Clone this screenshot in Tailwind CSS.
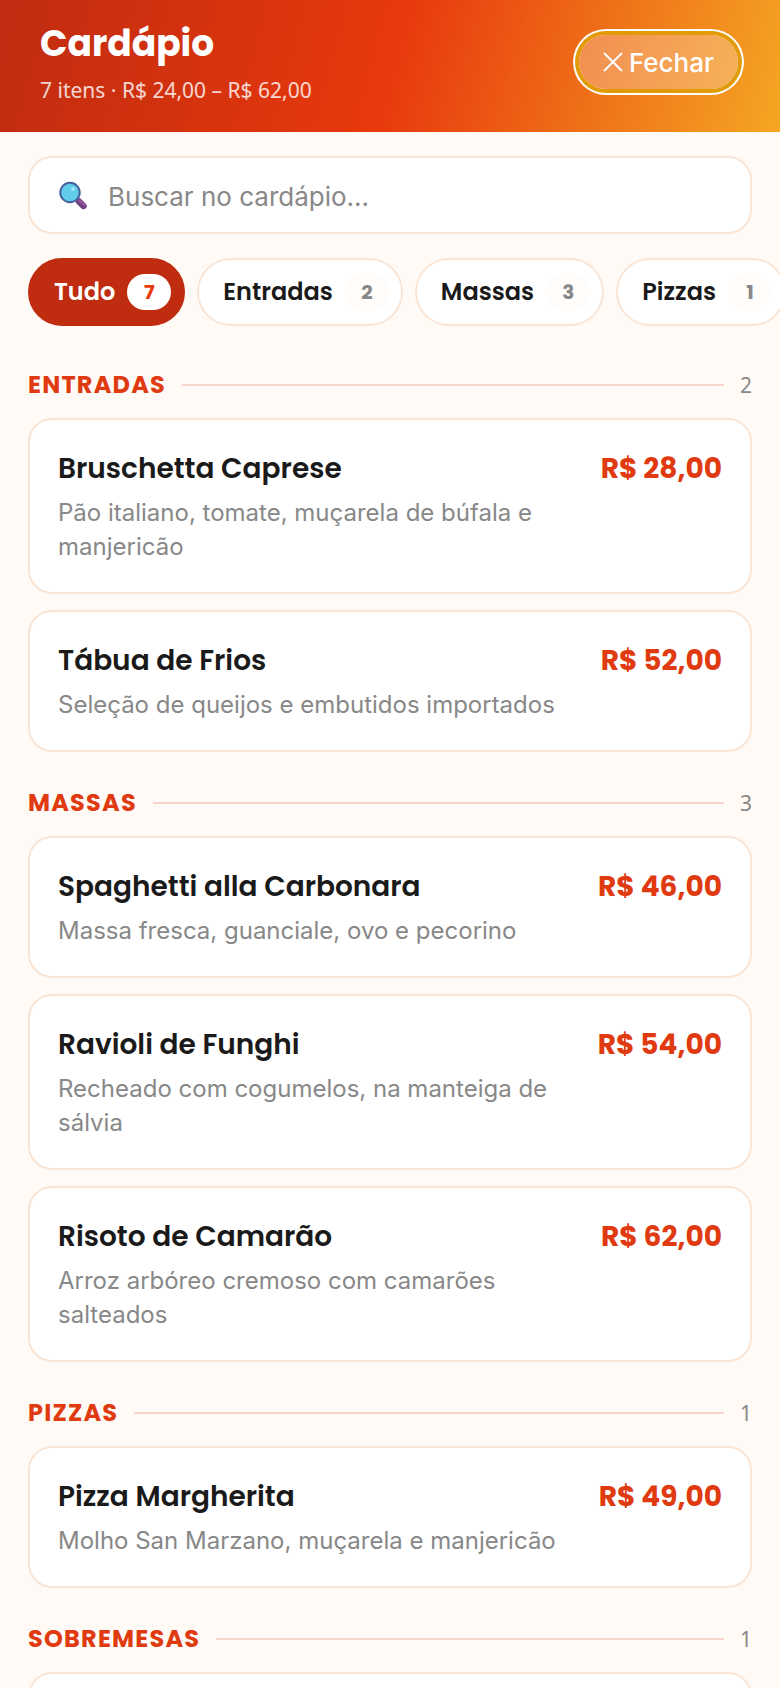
<!DOCTYPE html>
<html lang="pt-BR">
<head>
    <meta charset="UTF-8">
    <meta name="viewport" content="width=device-width, initial-scale=1.0">
    <title>Cardápio</title>
    <script src="https://cdn.jsdelivr.net/npm/@tailwindcss/browser@4"></script>
</head>
<body class="h-screen flex flex-col overflow-hidden bg-[#fffaf5] text-[#1a1a1a] font-['Poppins','Inter',sans-serif]">

    <!-- Cabeçalho -->
    <header class="shrink-0 flex items-center justify-between pt-5 pb-7 pl-10 pr-[42px] text-white bg-[linear-gradient(105deg,#bf2c10_0%,#e8380d_50%,#f5a623_100%)]">
        <div>
            <h1 class="text-[36px] leading-[48px] font-bold">Cardápio</h1>
            <p class="mt-2 text-[21px] leading-7 text-white/80 font-['Segoe_UI','Noto_Sans',sans-serif]">7 itens · R$ 24,00 – R$ 62,00</p>
        </div>
        <button type="button" id="fechar" class="flex items-center gap-[6px] h-[54px] px-6 rounded-full bg-white/25 shadow-[0_0_0_4px_#e29a08,0_0_0_6px_#fff] text-[26px] font-medium font-['Inter',sans-serif]">
            <svg class="w-5 h-5" viewBox="0 0 20 20" fill="none" stroke="currentColor" stroke-width="2" aria-hidden="true">
                <path d="M1 1l18 18M19 1L1 19"/>
            </svg>
            Fechar
        </button>
    </header>

    <main class="flex-1 overflow-y-auto pt-6 pb-10 [scrollbar-width:none]">

        <!-- Busca -->
        <div class="px-7">
            <label for="busca" class="flex items-center gap-5 h-[78px] px-7 bg-white border-2 border-[#fae5d5] rounded-3xl">
                <svg class="w-[30px] h-[30px] shrink-0" viewBox="0 0 30 30" aria-hidden="true">
                    <path d="M21 21.500l4.500 4.500" stroke="#6f4080" stroke-width="6.500" stroke-linecap="round"/>
                    <path d="M21.500 20.500l5 4.500" stroke="#93549a" stroke-width="3" stroke-linecap="round"/>
                    <circle cx="12" cy="12.500" r="9.700" fill="#62cdea" stroke="#45609c" stroke-width="2"/>
                    <circle cx="15" cy="9" r="2" fill="#a5e6f7"/>
                </svg>
                <input id="busca" type="text" placeholder="Buscar no cardápio..." aria-label="Buscar no cardápio" class="flex-1 min-w-0 pt-[2px] bg-transparent outline-none text-[26px] font-['Inter',sans-serif] placeholder:text-[#888888]">
            </label>
        </div>

        <!-- Categorias -->
        <nav aria-label="Categorias" class="flex gap-3 mt-6 px-7 overflow-x-auto text-[24px] font-semibold [scrollbar-width:none]">
            <button type="button" class="shrink-0 flex items-center gap-3 h-[68px] pl-6 pr-3 rounded-full border-2 border-[#bf2c10] bg-[#bf2c10] text-white">
                Tudo <span class="w-11 h-9 rounded-full bg-white text-[#e8380d] text-[20px] leading-9 font-bold">7</span>
            </button>
            <button type="button" class="shrink-0 flex items-center gap-3 h-[68px] pl-6 pr-3 rounded-full border-2 border-[#fae5d5] bg-white">
                Entradas <span class="w-11 h-9 rounded-full bg-[#fffcfa] text-[#888888] text-[20px] leading-9 font-bold">2</span>
            </button>
            <button type="button" class="shrink-0 flex items-center gap-3 h-[68px] pl-6 pr-3 rounded-full border-2 border-[#fae5d5] bg-white">
                Massas <span class="w-11 h-9 rounded-full bg-[#fffcfa] text-[#888888] text-[20px] leading-9 font-bold">3</span>
            </button>
            <button type="button" class="shrink-0 flex items-center gap-3 h-[68px] pl-6 pr-3 rounded-full border-2 border-[#fae5d5] bg-white">
                Pizzas <span class="w-11 h-9 rounded-full bg-[#fffcfa] text-[#888888] text-[20px] leading-9 font-bold">1</span>
            </button>
            <button type="button" class="shrink-0 flex items-center gap-3 h-[68px] pl-6 pr-3 rounded-full border-2 border-[#fae5d5] bg-white">
                Sobremesas <span class="w-11 h-9 rounded-full bg-[#fffcfa] text-[#888888] text-[20px] leading-9 font-bold">1</span>
            </button>
        </nav>

        <!-- Itens -->
        <div class="flex flex-col gap-[34px] mt-[42px] px-7">
            <section class="flex flex-col gap-4">
                <div class="flex items-center gap-4 leading-[34px]">
                    <h2 class="text-[24px] font-bold tracking-wider text-[#e03a10]">ENTRADAS</h2>
                    <span class="flex-1 h-[2px] bg-[#f9d3c7]"></span>
                    <span class="text-[21px] text-[#888888] font-['Segoe_UI','Noto_Sans',sans-serif]">2</span>
                </div>
                <article class="flex justify-between gap-6 p-7 bg-white border-2 border-[#fae5d5] rounded-3xl">
                    <div>
                        <h3 class="text-[28px] leading-[42px] font-semibold">Bruschetta Caprese</h3>
                        <p class="mt-[6px] text-[24px] leading-[34px] text-[#888888] font-['Inter',sans-serif]">Pão italiano, tomate, muçarela de búfala e manjericão</p>
                    </div>
                    <span class="shrink-0 text-[28px] leading-[42px] font-bold text-[#e03a10]">R$ 28,00</span>
                </article>
                <article class="flex justify-between gap-6 p-7 bg-white border-2 border-[#fae5d5] rounded-3xl">
                    <div>
                        <h3 class="text-[28px] leading-[42px] font-semibold">Tábua de Frios</h3>
                        <p class="mt-[6px] text-[24px] leading-[34px] text-[#888888] font-['Inter',sans-serif]">Seleção de queijos e embutidos importados</p>
                    </div>
                    <span class="shrink-0 text-[28px] leading-[42px] font-bold text-[#e03a10]">R$ 52,00</span>
                </article>
            </section>

            <section class="flex flex-col gap-4">
                <div class="flex items-center gap-4 leading-[34px]">
                    <h2 class="text-[24px] font-bold tracking-wider text-[#e03a10]">MASSAS</h2>
                    <span class="flex-1 h-[2px] bg-[#f9d3c7]"></span>
                    <span class="text-[21px] text-[#888888] font-['Segoe_UI','Noto_Sans',sans-serif]">3</span>
                </div>
                <article class="flex justify-between gap-6 p-7 bg-white border-2 border-[#fae5d5] rounded-3xl">
                    <div>
                        <h3 class="text-[28px] leading-[42px] font-semibold">Spaghetti alla Carbonara</h3>
                        <p class="mt-[6px] text-[24px] leading-[34px] text-[#888888] font-['Inter',sans-serif]">Massa fresca, guanciale, ovo e pecorino</p>
                    </div>
                    <span class="shrink-0 text-[28px] leading-[42px] font-bold text-[#e03a10]">R$ 46,00</span>
                </article>
                <article class="flex justify-between gap-6 p-7 bg-white border-2 border-[#fae5d5] rounded-3xl">
                    <div>
                        <h3 class="text-[28px] leading-[42px] font-semibold">Ravioli de Funghi</h3>
                        <p class="mt-[6px] text-[24px] leading-[34px] text-[#888888] font-['Inter',sans-serif]">Recheado com cogumelos, na manteiga de sálvia</p>
                    </div>
                    <span class="shrink-0 text-[28px] leading-[42px] font-bold text-[#e03a10]">R$ 54,00</span>
                </article>
                <article class="flex justify-between gap-6 p-7 bg-white border-2 border-[#fae5d5] rounded-3xl">
                    <div>
                        <h3 class="text-[28px] leading-[42px] font-semibold">Risoto de Camarão</h3>
                        <p class="mt-[6px] text-[24px] leading-[34px] text-[#888888] font-['Inter',sans-serif]">Arroz arbóreo cremoso com camarões salteados</p>
                    </div>
                    <span class="shrink-0 text-[28px] leading-[42px] font-bold text-[#e03a10]">R$ 62,00</span>
                </article>
            </section>

            <section class="flex flex-col gap-4">
                <div class="flex items-center gap-4 leading-[34px]">
                    <h2 class="text-[24px] font-bold tracking-wider text-[#e03a10]">PIZZAS</h2>
                    <span class="flex-1 h-[2px] bg-[#f9d3c7]"></span>
                    <span class="text-[21px] text-[#888888] font-['Segoe_UI','Noto_Sans',sans-serif]">1</span>
                </div>
                <article class="flex justify-between gap-6 p-7 bg-white border-2 border-[#fae5d5] rounded-3xl">
                    <div>
                        <h3 class="text-[28px] leading-[42px] font-semibold">Pizza Margherita</h3>
                        <p class="mt-[6px] text-[24px] leading-[34px] text-[#888888] font-['Inter',sans-serif]">Molho San Marzano, muçarela e manjericão</p>
                    </div>
                    <span class="shrink-0 text-[28px] leading-[42px] font-bold text-[#e03a10]">R$ 49,00</span>
                </article>
            </section>

            <section class="flex flex-col gap-4">
                <div class="flex items-center gap-4 leading-[34px]">
                    <h2 class="text-[24px] font-bold tracking-wider text-[#e03a10]">SOBREMESAS</h2>
                    <span class="flex-1 h-[2px] bg-[#f9d3c7]"></span>
                    <span class="text-[21px] text-[#888888] font-['Segoe_UI','Noto_Sans',sans-serif]">1</span>
                </div>
                <article class="flex justify-between gap-6 p-7 bg-white border-2 border-[#fae5d5] rounded-3xl">
                    <div>
                        <h3 class="text-[28px] leading-[42px] font-semibold">Tiramisù</h3>
                        <p class="mt-[6px] text-[24px] leading-[34px] text-[#888888] font-['Inter',sans-serif]">Mascarpone, café e cacau</p>
                    </div>
                    <span class="shrink-0 text-[28px] leading-[42px] font-bold text-[#e03a10]">R$ 24,00</span>
                </article>
            </section>
        </div>
    </main>
</body>
</html>
